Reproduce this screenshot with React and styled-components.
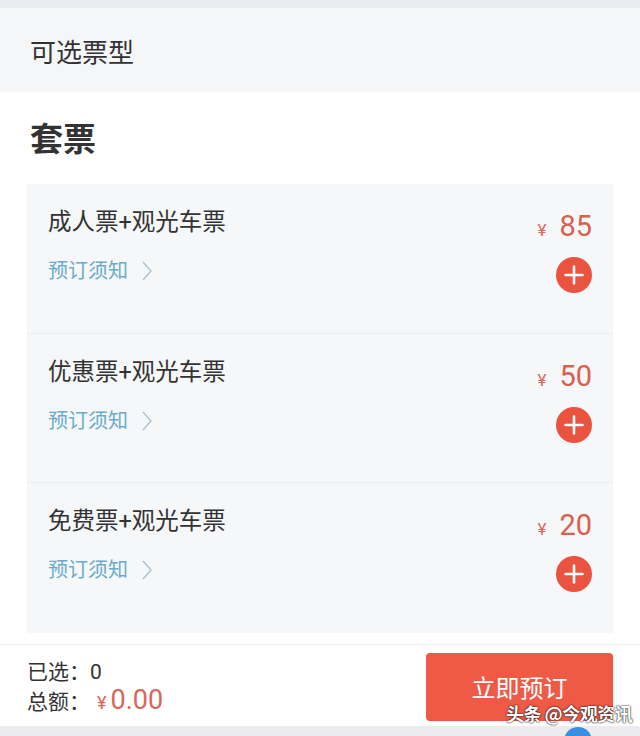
import React from 'react';
import styled, { createGlobalStyle } from 'styled-components';

const tickets = [
  { id: 1, name: '成人票+观光车票', price: 85 },
  { id: 2, name: '优惠票+观光车票', price: 50 },
  { id: 3, name: '免费票+观光车票', price: 20 }
];

const GlobalStyle = createGlobalStyle`
  html, body {
    margin: 0;
    padding: 0;
    background: #ffffff;
  }
  body {
    font-family: Roboto, "Noto Sans CJK SC", "Noto Sans", sans-serif;
    color: #333333;
  }
`;

function PlusIcon() {
  return (
    <svg width="36" height="36" viewBox="0 0 36 36">
      <circle cx="18" cy="18" r="18" fill="#e9533f" />
      <path d="M18 9.5v17M9.5 18h17" stroke="#ffffff" strokeWidth="2.6" strokeLinecap="round" />
    </svg>
  );
}

function Chevron() {
  return (
    <svg width="12" height="22" viewBox="0 0 12 22">
      <polyline points="2,2 10,11 2,20" fill="none" stroke="#a8c3d1" strokeWidth="1.4" />
    </svg>
  );
}

function App() {
  return (
    <Page>
      <GlobalStyle />
      <TopStrip />
      <Header>可选票型</Header>
      <Section>
        <SectionTitle>套票</SectionTitle>
        <TicketList>
          {tickets.map((t) => (
            <Ticket key={t.id}>
              <TicketInfo>
                <TicketName>{t.name}</TicketName>
                <Notice>
                  预订须知
                  <Chevron />
                </Notice>
              </TicketInfo>
              <TicketSide>
                <Price>
                  <Yen>¥</Yen>
                  {t.price}
                </Price>
                <AddButton aria-label="add">
                  <PlusIcon />
                </AddButton>
              </TicketSide>
            </Ticket>
          ))}
        </TicketList>
      </Section>
      <Footer>
        <Summary>
          <SummaryRow>已选：0</SummaryRow>
          <SummaryRow>
            总额：<Total><TotalYen>¥</TotalYen>0.00</Total>
          </SummaryRow>
        </Summary>
        <BookButton>立即预订</BookButton>
      </Footer>
      <BottomStrip />
      <Watermark>
        头条 @今观资讯
        <WatermarkDot />
      </Watermark>
    </Page>
  );
}

const Page = styled.div`
  position: relative;
  width: 640px;
  height: 736px;
  overflow: hidden;
  display: flex;
  flex-direction: column;
`;

const TopStrip = styled.div`
  height: 8px;
  background: #ebecf2;
`;

const Header = styled.div`
  height: 84px;
  background: #f5f6f8;
  display: flex;
  align-items: center;
  padding-left: 30px;
  font-size: 26px;
  color: #333333;
`;

const Section = styled.div`
  padding: 0 27px;
`;

const SectionTitle = styled.h2`
  margin: 0;
  height: 92px;
  display: flex;
  align-items: center;
  padding-left: 3px;
  padding-bottom: 3px;
  box-sizing: border-box;
  font-size: 33px;
  font-weight: 700;
  color: #333333;
`;

const TicketList = styled.div`
  background: #f5f7f9;
  height: 449px;
`;

const Ticket = styled.div`
  height: 149px;
  box-sizing: border-box;
  display: flex;
  justify-content: space-between;
  padding: 22px 21px 0 21px;
  & + & {
    border-top: 1.5px solid #ebedf0;
  }
`;

const TicketInfo = styled.div`
  display: flex;
  flex-direction: column;
  gap: 19px;
`;

const TicketName = styled.div`
  font-size: 23.5px;
  line-height: 32px;
  color: #333333;
`;

const Notice = styled.div`
  display: flex;
  align-items: center;
  gap: 13px;
  font-size: 20px;
  line-height: 28px;
  color: #6aaccb;
`;

const TicketSide = styled.div`
  display: flex;
  flex-direction: column;
  align-items: flex-end;
  gap: 10px;
  padding-top: 3px;
`;

const Price = styled.div`
  font-size: 29px;
  line-height: 34px;
  color: #d9604f;
  display: flex;
  align-items: baseline;
`;

const Yen = styled.span`
  font-size: 17px;
  margin-right: 13px;
  color: #e0685a;
`;

const AddButton = styled.div`
  width: 36px;
  height: 36px;
  display: flex;
`;

const Footer = styled.div`
  margin-top: 11px;
  height: 82px;
  border-top: 1px solid #f0f1f3;
  box-sizing: border-box;
  display: flex;
  align-items: center;
  justify-content: space-between;
  padding: 0 27px;
`;

const Summary = styled.div`
  display: flex;
  flex-direction: column;
  padding-top: 4px;
`;

const SummaryRow = styled.div`
  font-size: 21px;
  line-height: 28px;
  color: #333333;
  display: flex;
  align-items: baseline;
`;

const Total = styled.span`
  color: #d9665a;
  font-size: 27px;
  margin-left: 7px;
`;

const TotalYen = styled.span`
  font-size: 18px;
  margin-right: 4px;
`;

const BookButton = styled.button`
  width: 187px;
  height: 68px;
  margin-top: 2px;
  border: none;
  border-radius: 4px;
  background: #ef5a47;
  color: #ffffff;
  font-family: inherit;
  font-size: 24px;
`;

const BottomStrip = styled.div`
  flex: 1;
  background: #ececee;
`;

const Watermark = styled.div`
  position: absolute;
  left: 506px;
  top: 700px;
  font-size: 18px;
  font-weight: 700;
  color: #ffffff;
  letter-spacing: -0.5px;
  text-shadow: 0 0 2px rgba(0, 0, 0, 0.9), 0 0 1px rgba(0, 0, 0, 0.9);
  font-family: "Noto Sans CJK SC", sans-serif;
`;

const WatermarkDot = styled.div`
  position: absolute;
  left: 58px;
  top: 27px;
  width: 28px;
  height: 28px;
  border-radius: 50%;
  background: #3b8fe0;
`;

export default App;
